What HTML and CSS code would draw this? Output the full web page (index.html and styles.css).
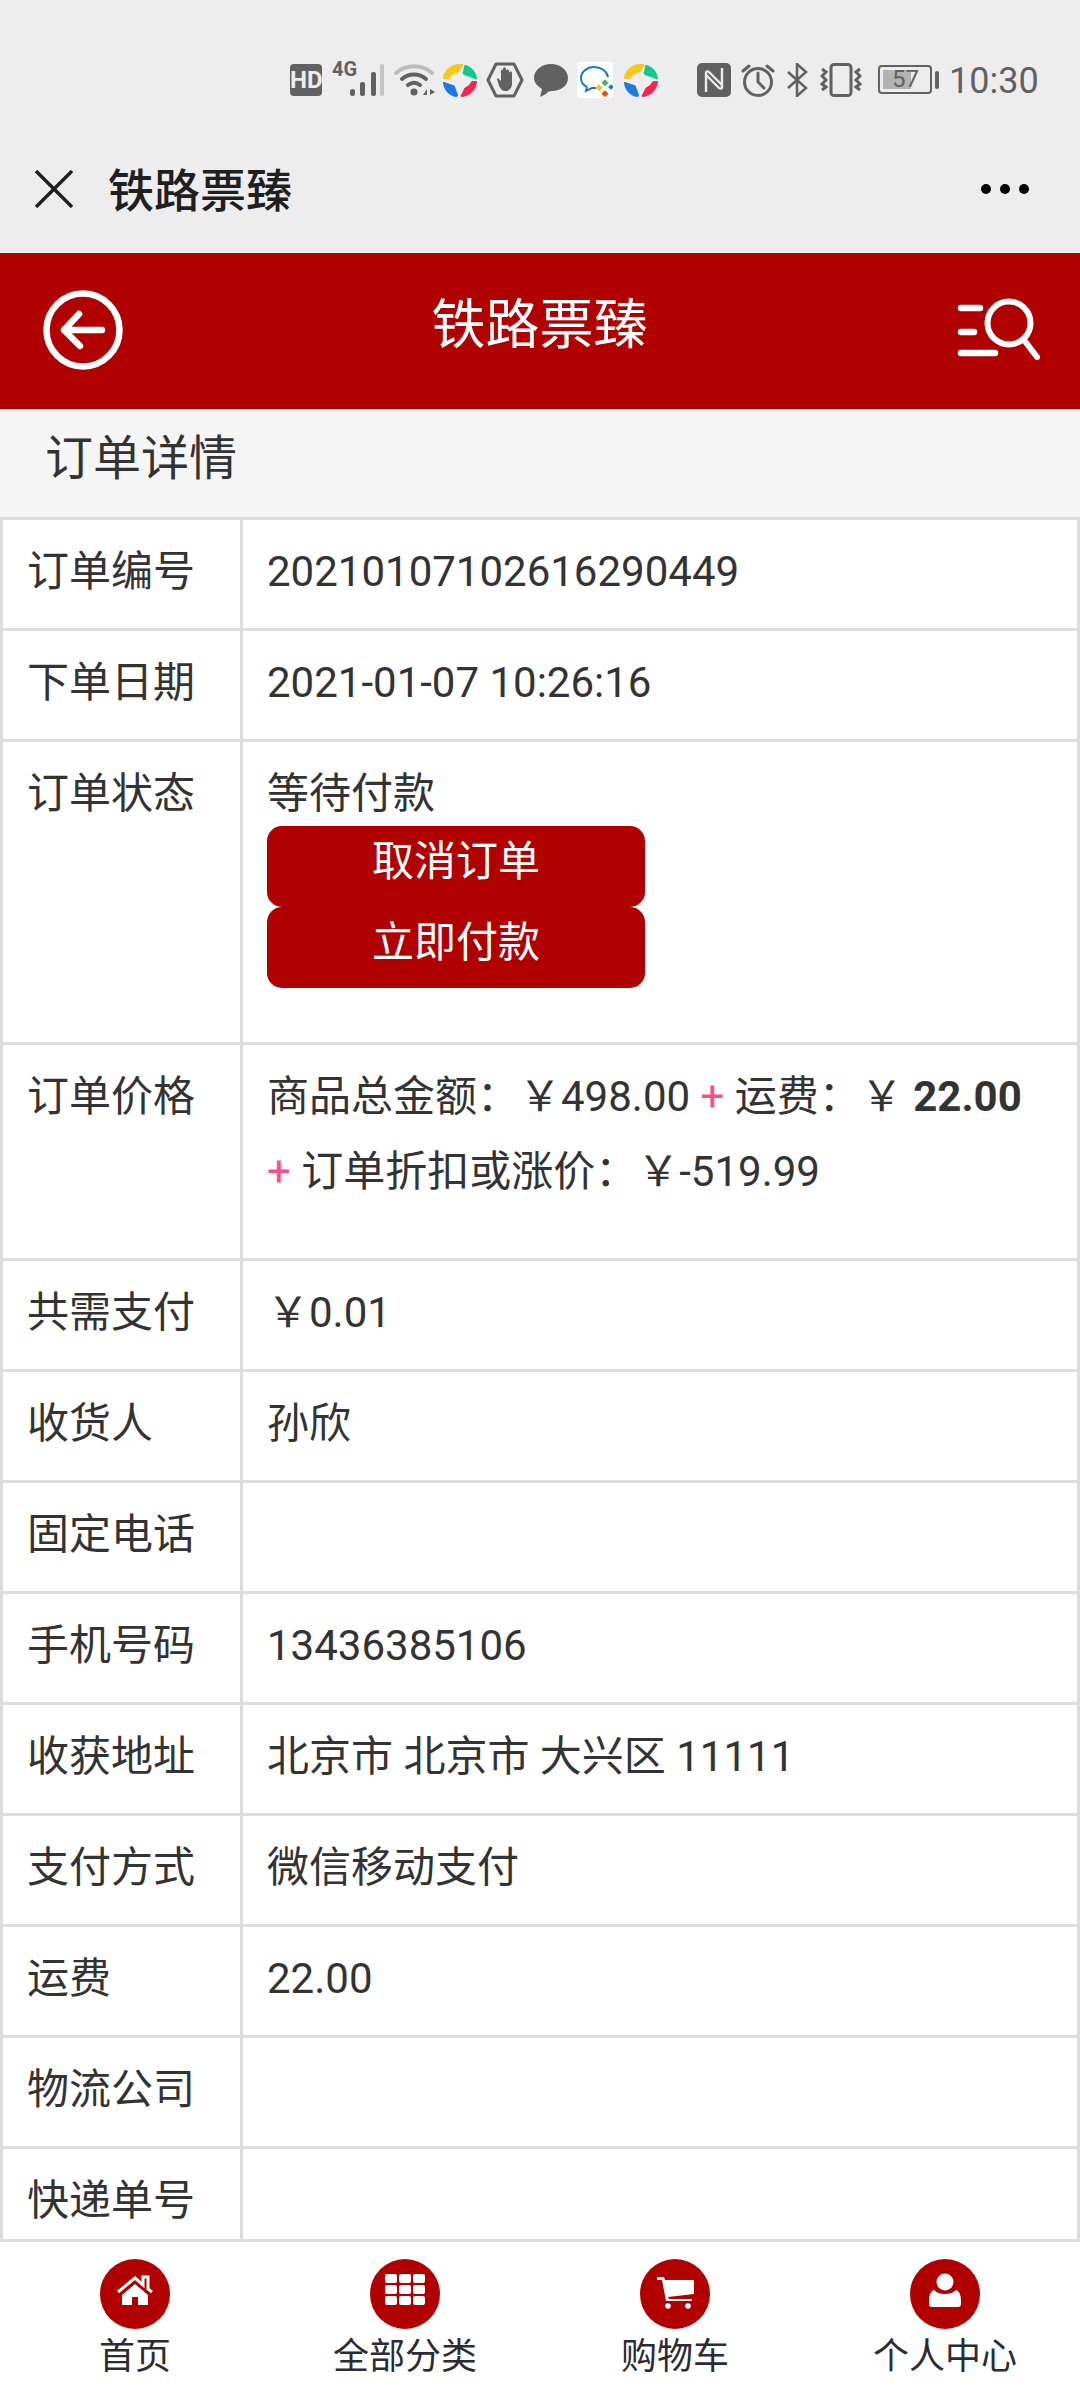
FILE: index.html
```html
<!DOCTYPE html>
<html lang="zh-CN">

<head>
  <meta charset="UTF-8">
  <meta name="viewport" content="width=device-width, initial-scale=1.0">
  <title>铁路票臻</title>

  <link rel="stylesheet" href="styles.css">
</head>

<body>
  <svg class="defs" width="0" height="0">
    <symbol id="ring" viewBox="0 0 36 36">
      <path fill="#f8c91c" d="M1 16C2 7 10 1 20 2c1 0 2 1 1 2l-4 6c-1 1-2 1-3 1-3 1-5 3-6 5-1 1-2 1-3 1H2c-1 0-1 0-1-1z" />
      <path fill="#12c98f" d="M24 3c6 2 10 7 11 13 0 1-1 2-2 1l-11-4c-1-1-2-2-1-3l1-6c0-1 1-1 2-1z" />
      <path fill="#f2274f" d="M35 20c-1 8-7 14-15 15-1 0-2-1-1-2l3-6c0-1 1-1 2-2 2-1 4-3 5-5 1-1 1-1 2-1l3 0c1 0 1 0 1 1z" />
      <path fill="#1e78e6" d="M2 20l9 3c1 0 2 1 2 2l3 8c0 1-1 2-2 2C8 34 2 29 1 21c0-1 0-1 1-1z" />
    </symbol>
  </svg>

  <div class="page">
    <div class="top-gray">
      <div class="status-bar">
        <span class="hd">HD</span>
        <span class="net">
          <span class="net-label">4G</span>
          <svg width="36" height="34" viewBox="0 0 36 34">
            <rect x="0" y="26" width="5" height="7" rx="2.5" fill="#616161" />
            <rect x="10" y="19" width="5" height="14" rx="2" fill="#616161" />
            <rect x="21" y="9" width="5" height="24" rx="2" fill="#616161" />
            <rect x="30" y="1" width="4" height="32" rx="2" fill="#c4c4c4" />
          </svg>
        </span>
        <svg class="wifi" width="42" height="34" viewBox="0 0 42 34" fill="none" stroke-linecap="round">
          <path d="M2 10C12 1 28 1 38 10" stroke="#bdbdbd" stroke-width="4" />
          <path d="M8 16c7-6 17-6 24 0" stroke="#616161" stroke-width="4" />
          <path d="M14 22c4-3 8-3 12 0" stroke="#616161" stroke-width="4" />
          <circle cx="20" cy="29" r="3.5" fill="#616161" />
          <path d="M29 32l4-6v6zM36 26l5 3-5 3z" fill="#616161" />
        </svg>
        <svg class="ring" width="36" height="36"><use href="#ring" /></svg>
        <svg class="hand" width="38" height="36" viewBox="0 0 38 36">
          <path d="M10 2h18l8 16-8 16H10L2 18z" fill="none" stroke="#616161" stroke-width="3" stroke-linejoin="round" />
          <path d="M11 17l1-1 3 3V9c0-2 2-2 2 0V7c0-2 3-2 3 0v2c0-2 3-2 3 0v2c0-2 3-2 3 0v11c0 4-3 7-6 7-4 0-5-2-7-5z" fill="#616161" />
        </svg>
        <svg class="bubble" width="36" height="36" viewBox="0 0 36 36">
          <path d="M18 2c9 0 17 6 17 14s-8 13-16 13c-3 0-5 1-6 3l-6 3 2-8C4 24 1 20 1 16 1 8 9 2 18 2z" fill="#616161" />
        </svg>
        <svg class="wecom" width="36" height="36" viewBox="0 0 36 36">
          <rect width="36" height="36" rx="2" fill="#fff" />
          <path d="M10 25C6 23 4 20 4 16 4 10 10 5 17 5s13 4 14 10" fill="none" stroke="#1976d2" stroke-width="2" />
          <path d="M10 25l-1 4 6-3c1 0 3 0 4 0" fill="none" stroke="#1976d2" stroke-width="2" />
          <rect x="26" y="18" width="5" height="5" transform="rotate(45 28 20)" fill="#4caf50" />
          <rect x="32" y="23" width="4" height="4" fill="#1976d2" transform="rotate(45 34 25)" />
          <rect x="20" y="23" width="5" height="5" transform="rotate(45 22 25)" fill="#fbc02d" />
          <rect x="26" y="29" width="5" height="5" transform="rotate(45 28 31)" fill="#e65100" />
        </svg>
        <svg class="ring ring-second" width="36" height="36"><use href="#ring" /></svg>
        <svg class="nfc" width="34" height="34" viewBox="0 0 34 34" fill="none">
          <rect width="34" height="34" rx="5" fill="#616161" />
          <path d="M9 29V10c0-2 2-2 3-1l13 13" stroke="#ededed" stroke-width="2.4" />
          <path d="M25 5v19c0 2-2 2-3 1L9 12" stroke="#ededed" stroke-width="2.4" />
        </svg>
        <svg class="alarm" width="34" height="34" viewBox="0 0 34 34" fill="none" stroke="#616161" stroke-linecap="round">
          <circle cx="17" cy="19" r="13.5" stroke-width="3" />
          <path d="M17 10v9l6 6" stroke-width="3" />
          <path d="M2 8l6-5M32 8l-6-5" stroke-width="3" />
        </svg>
        <svg class="bt" width="22" height="34" viewBox="0 0 22 34" fill="none" stroke="#616161" stroke-width="2.5">
          <path d="M2 9l18 16-9 8V1l9 8L2 25" />
        </svg>
        <svg class="vibrate" width="42" height="34" viewBox="0 0 42 34" fill="none" stroke="#616161">
          <rect x="11" y="1.5" width="20" height="31" rx="3" stroke-width="3" />
          <path d="M2 6l4 3-4 4 4 4-4 4 4 3-4 3M40 6l-4 3 4 4-4 4 4 4-4 3 4 3" stroke-width="3" />
        </svg>
        <span class="battery">
          <span class="battery-body">
            <span class="battery-fill"></span>
            <span class="battery-num">57</span>
          </span>
          <span class="battery-nub"></span>
        </span>
        <span class="time">10:30</span>
      </div>

      <div class="wx-bar">
        <svg class="wx-close" width="38" height="38" viewBox="0 0 38 38">
          <path d="M1 1l36 36M37 1L1 37" stroke="#1f1f1f" stroke-width="3.4" />
        </svg>
        <span class="wx-title">铁路票臻</span>
        <span class="wx-more"><i></i><i></i><i></i></span>
      </div>
    </div>

    <header class="app-header">
      <svg class="back-icon" width="80" height="80" viewBox="0 0 80 80" fill="none" stroke="#fff" stroke-linecap="round" stroke-linejoin="round">
        <circle cx="40" cy="40" r="36.5" stroke-width="6.5" />
        <path d="M21 40h38M36 24L21 40l16 16" stroke-width="6.5" />
      </svg>
      <h1 class="app-title">铁路票臻</h1>
      <svg class="search-icon" width="84" height="66" viewBox="0 0 84 66" fill="none" stroke="#fff" stroke-linecap="round">
        <circle cx="52" cy="25" r="21.5" stroke-width="6" />
        <path d="M67 42l13 17" stroke-width="6" />
        <path d="M4 10h19M4 34h13M4 55h34" stroke-width="6.5" />
      </svg>
    </header>

    <h2 class="sub-title">订单详情</h2>

    <div class="content">
      <table class="order">
        <tr>
          <td class="label">订单编号</td>
          <td>20210107102616290449</td>
        </tr>
        <tr>
          <td class="label">下单日期</td>
          <td>2021-01-07 10:26:16</td>
        </tr>
        <tr>
          <td class="label">订单状态</td>
          <td class="state">
            等待付款
            <button class="btn btn-first">取消订单</button>
            <button class="btn">立即付款</button>
          </td>
        </tr>
        <tr>
          <td class="label">订单价格</td>
          <td class="price">商品总金额：￥498.00 <span class="plus">+</span> 运费：￥ <b>22.00</b><br><span class="plus">+</span> 订单折扣或涨价：￥-519.99</td>
        </tr>
        <tr>
          <td class="label">共需支付</td>
          <td>￥0.01</td>
        </tr>
        <tr>
          <td class="label">收货人</td>
          <td>孙欣</td>
        </tr>
        <tr>
          <td class="label">固定电话</td>
          <td></td>
        </tr>
        <tr>
          <td class="label">手机号码</td>
          <td>13436385106</td>
        </tr>
        <tr>
          <td class="label">收获地址</td>
          <td>北京市 北京市 大兴区 11111</td>
        </tr>
        <tr>
          <td class="label">支付方式</td>
          <td>微信移动支付</td>
        </tr>
        <tr>
          <td class="label">运费</td>
          <td>22.00</td>
        </tr>
        <tr>
          <td class="label">物流公司</td>
          <td></td>
        </tr>
        <tr>
          <td class="label">快递单号</td>
          <td></td>
        </tr>
      </table>
    </div>

    <nav class="tabbar">
      <a class="tab">
        <svg class="tab-icon" width="70" height="70" viewBox="0 0 70 70">
          <circle cx="35" cy="35" r="35" fill="#b00000" />
          <path d="M18 33l17-14 8 7v-8h5v12l4 3" fill="none" stroke="#fff" stroke-width="3" />
          <path d="M22 36l13-11 13 11v10H38v-8h-6v8H22z" fill="#fff" />
        </svg>
        <span>首页</span>
      </a>
      <a class="tab">
        <svg class="tab-icon" width="70" height="70" viewBox="0 0 70 70">
          <circle cx="35" cy="35" r="35" fill="#b00000" />
          <g fill="#fff">
            <rect x="15" y="15" width="12" height="9" rx="2" />
            <rect x="29" y="15" width="12" height="9" rx="2" />
            <rect x="43" y="15" width="12" height="9" rx="2" />
            <rect x="15" y="26" width="12" height="9" rx="2" />
            <rect x="29" y="26" width="12" height="9" rx="2" />
            <rect x="43" y="26" width="12" height="9" rx="2" />
            <rect x="15" y="37" width="12" height="9" rx="2" />
            <rect x="29" y="37" width="12" height="9" rx="2" />
            <rect x="43" y="37" width="12" height="9" rx="2" />
          </g>
        </svg>
        <span>全部分类</span>
      </a>
      <a class="tab">
        <svg class="tab-icon" width="70" height="70" viewBox="0 0 70 70">
          <circle cx="35" cy="35" r="35" fill="#b00000" />
          <path d="M17 18h7l1 3 29 0v14l-26 3 1 2h23v2H26l-4-21h-5z" fill="#fff" />
          <circle cx="28" cy="47" r="2.8" fill="#fff" />
          <circle cx="48" cy="47" r="2.8" fill="#fff" />
        </svg>
        <span>购物车</span>
      </a>
      <a class="tab">
        <svg class="tab-icon" width="70" height="70" viewBox="0 0 70 70">
          <circle cx="35" cy="35" r="35" fill="#b00000" />
          <circle cx="35" cy="23" r="8.5" fill="#fff" />
          <path d="M24 31c3 3 7 4 11 4s8-1 11-4c3 1 5 5 5 10v4c0 2-1 3-3 3H22c-2 0-3-1-3-3v-4c0-5 2-9 5-10z" fill="#fff" />
        </svg>
        <span>个人中心</span>
      </a>
    </nav>
  </div>
</body>

</html>
```

FILE: styles.css
```css
* {
  box-sizing: border-box;
}

body {
  color: #333;
  font-family: Roboto, "Noto Sans CJK SC", sans-serif;
  font-size: 42px;
  margin: 0;
}

.defs {
  display: block;
  height: 0;
}

.page {
  display: flex;
  flex-direction: column;
  height: 2400px;
  overflow: hidden;
  width: 1080px;
}

.top-gray {
  background: #ededed;
  flex: none;
  height: 253px;
}

/* status bar */
.status-bar {
  align-items: center;
  color: #616161;
  display: flex;
  height: 130px;
  padding: 29px 42px 0 290px;
}

.hd {
  background: #616161;
  border-radius: 4px;
  color: #ededed;
  flex: none;
  font-size: 24px;
  font-weight: 700;
  height: 32px;
  line-height: 32px;
  text-align: center;
  width: 32px;
}

.net {
  display: flex;
  flex: none;
  margin-left: 10px;
  position: relative;
  width: 54px;
}

.net svg {
  margin-left: 18px;
}

.net-label {
  font-size: 20px;
  font-weight: 700;
  left: 0;
  line-height: 18px;
  position: absolute;
  top: -3px;
}

.status-bar svg {
  flex: none;
}

.wifi {
  margin-left: 8px;
}

.ring {
  margin-left: 6px;
}

.hand {
  margin-left: 8px;
}

.bubble {
  margin-left: 9px;
}

.wecom {
  margin-left: 8px;
}

.ring-second {
  margin-left: 10px;
}

.nfc {
  margin-left: 38px;
}

.alarm {
  margin-left: 10px;
}

.bt {
  margin-left: 11px;
}

.vibrate {
  margin-left: 12px;
}

.battery {
  align-items: center;
  display: flex;
  flex: none;
  margin-left: 16px;
}

.battery-body {
  border: 2px solid #616161;
  border-radius: 4px;
  display: block;
  height: 29px;
  position: relative;
  width: 54px;
}

.battery-fill {
  background: #b3b3b3;
  display: block;
  height: 19px;
  margin: 3px;
  width: 28px;
}

.battery-num {
  font-size: 24px;
  left: 12px;
  line-height: 25px;
  position: absolute;
  top: 0;
}

.battery-nub {
  background: #616161;
  border-radius: 2px;
  display: block;
  height: 18px;
  margin-left: 3px;
  width: 4px;
}

.time {
  flex: none;
  font-size: 36px;
  margin: 2px 0 0 10px;
}

/* wechat title bar */
.wx-bar {
  align-items: center;
  display: flex;
  height: 117px;
  padding: 0 51px 0 35px;
}

.wx-title {
  color: #1f1f1f;
  flex: 1;
  font-size: 46px;
  font-weight: 500;
  margin: -3px 0 0 35px;
}

.wx-more {
  display: flex;
  gap: 9px;
}

.wx-more i {
  background: #000;
  border-radius: 50%;
  display: block;
  height: 10px;
  width: 10px;
}

/* red header */
.app-header {
  align-items: center;
  background: #b00000;
  display: flex;
  flex: none;
  height: 156px;
  justify-content: space-between;
  padding: 0 39px 0 43px;
}

.back-icon {
  margin-top: -2px;
}

.app-title {
  color: #fff;
  font-size: 54px;
  font-weight: 400;
  margin: -21px 0 0 -1px;
}

.sub-title {
  background: #f5f5f5;
  flex: none;
  font-size: 48px;
  font-weight: 400;
  height: 108px;
  line-height: 100px;
  margin: 0;
  padding-left: 45px;
}

/* table */
.content {
  flex: 1;
  min-height: 0;
  overflow: hidden;
}

.order {
  border-collapse: collapse;
  table-layout: fixed;
  width: 1080px;
}

.order td {
  border: 3px solid #ddd;
  height: 111px;
  line-height: 48px;
  padding: 28px 24px 0 24px;
  vertical-align: top;
}

.order .label {
  padding-left: 24px;
  width: 240px;
}

.order .state {
  height: 303px;
}

.btn {
  background: #b00000;
  border: 0;
  border-radius: 15px;
  color: #fff;
  display: block;
  font-family: inherit;
  font-size: 42px;
  height: 81px;
  line-height: 70px;
  padding: 0 0 10px;
  width: 378px;
}

.btn-first {
  margin-top: 8px;
}

.order .price {
  height: 216px;
  line-height: 75px;
  padding-top: 14px;
}

.plus {
  color: #f6508c;
}

/* bottom tabs */
.tabbar {
  background: #fff;
  border-top: 3px solid #ddd;
  display: grid;
  flex: none;
  grid-template-columns: repeat(4, 1fr);
  height: 161px;
  padding-top: 17px;
}

.tab {
  align-items: center;
  color: #2b2b33;
  display: flex;
  flex-direction: column;
  font-size: 36px;
  line-height: 52px;
  padding-top: 0;
}

.tab span {
  padding-top: 2px;
}

.tab-icon {
  display: block;
}
```
